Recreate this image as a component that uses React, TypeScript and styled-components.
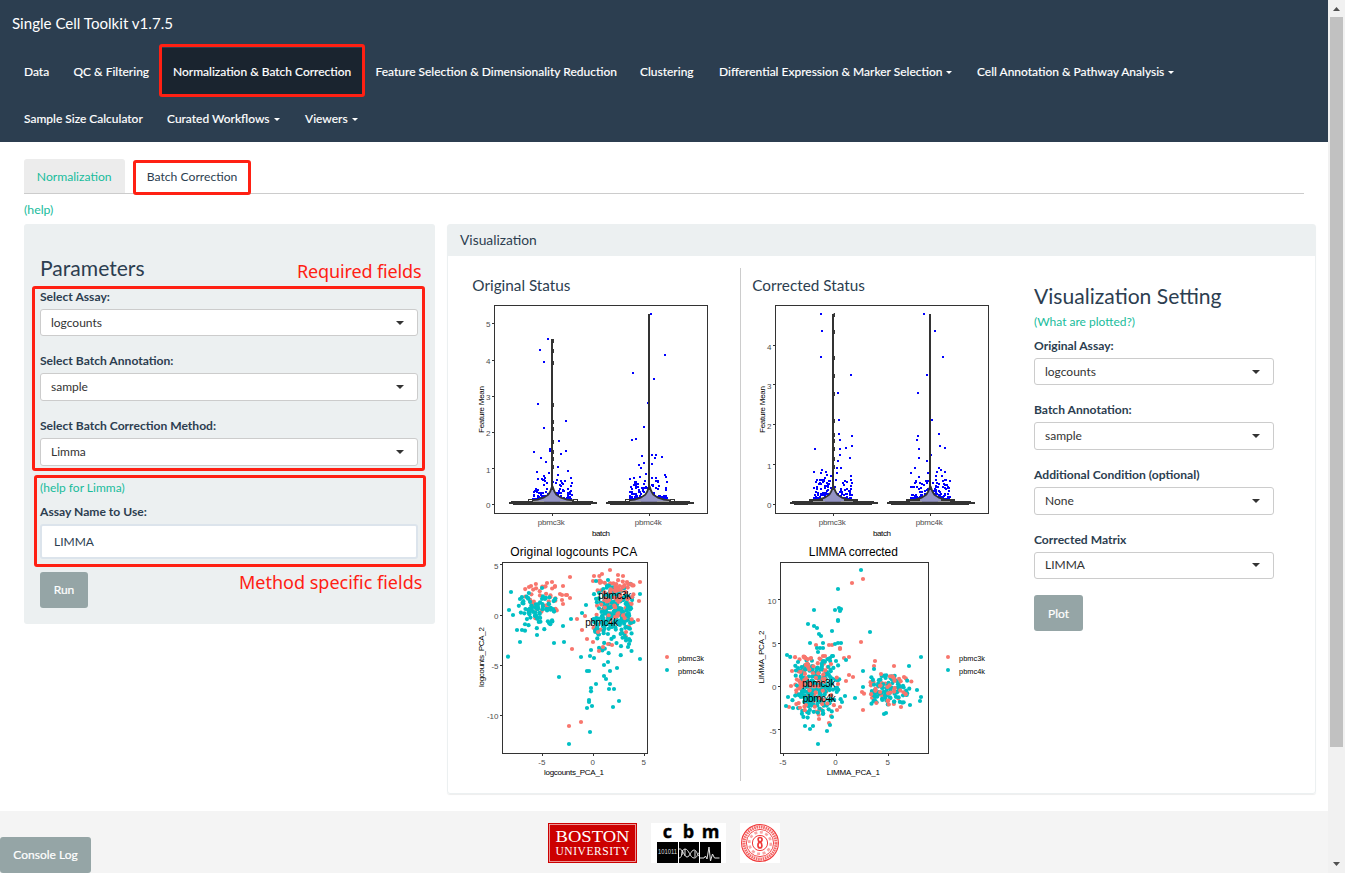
import React from 'react';
import styled, { createGlobalStyle, css } from 'styled-components';

const GlobalStyle = createGlobalStyle`
  * { box-sizing: border-box; }
  html, body { margin: 0; height: 100%; overflow: hidden; }
  body {
    background: #fff;
    color: #2c3e50;
    font: 12px/17px Lato, "Open Sans", sans-serif;
  }
`;

const Shell = styled.div`
  display: flex;
  width: 1345px;
  height: 873px;
`;

const Page = styled.div`
  position: relative;
  display: flex;
  flex-direction: column;
  width: 1328px;
  height: 873px;
`;

/* ---------- navigation ---------- */

const Navbar = styled.nav`
  display: flex;
  flex-direction: column;
  height: 142px;
  background: #2c3e50;
  color: #fff;
`;

const Brand = styled.div`
  height: 48px;
  padding-left: 12px;
  font-size: 15.1px;
  line-height: 47px;
`;

const NavRow = styled.div`
  display: flex;
  height: 47px;
  padding-left: 12px;
`;

const NavItem = styled.a<{ $active?: boolean; $w: number }>`
  display: flex;
  align-items: center;
  gap: 4px;
  width: ${p => p.$w}px;
  padding-left: 12px;
  white-space: nowrap;
  font-size: 11.98px;
  font-weight: 500;
  -webkit-text-stroke: 0.1px #fff;
  background: ${p => (p.$active ? '#1a242f' : 'transparent')};
`;

const Caret = styled.i<{ $dark?: boolean }>`
  width: 0;
  height: 0;
  margin-top: 1px;
  border: ${p => (p.$dark ? 4 : 3.2)}px solid transparent;
  border-top-color: ${p => (p.$dark ? '#333' : '#fff')};
  border-bottom: 0;
`;

/* ---------- tabs ---------- */

const Main = styled.main`
  display: flex;
  flex-direction: column;
  height: 669px;
  padding: 17px 12px 0 24px;
`;

const Tabs = styled.div`
  display: flex;
  gap: 9px;
  width: 1280px;
  height: 35px;
  border-bottom: 1px solid #ccc;
`;

const Tab = styled.a<{ $active?: boolean }>`
  width: ${p => (p.$active ? 117 : 101)}px;
  height: 34px;
  padding: 0 12.8px;
  font-size: 12.15px;
  line-height: 36px;
  white-space: nowrap;
  border-radius: 3px 3px 0 0;
  color: ${p => (p.$active ? '#2c3e50' : '#18bc9c')};
  background: ${p => (p.$active ? '#fff' : '#ececec')};
`;

const Link = styled.a`
  display: block;
  color: #18bc9c;
`;

const HelpLink = styled(Link)`
  height: 30px;
  padding-top: 7px;
  font-size: 12.3px;
`;

const Columns = styled.div`
  display: flex;
  align-items: flex-start;
  gap: 12px;
`;

/* ---------- forms ---------- */

const Sidebar = styled.section`
  width: 411px;
  height: 400px;
  padding: 32px 17px 0 16px;
  background: #ecf0f1;
  border-radius: 3px;
`;

const Heading = styled.h3`
  height: 23px;
  margin: 0 0 8.8px;
  font-size: 21.1px;
  font-weight: 400;
  line-height: 23px;
`;

const Label = styled.label`
  display: block;
  margin-bottom: 4px;
  line-height: 17px;
  font-size: 12.1px;
  font-weight: 700;
`;

const FieldBox = styled.div`
  margin-bottom: 16px;
`;

const SelectBox = styled.div`
  display: flex;
  align-items: center;
  justify-content: space-between;
  height: 27.6px;
  padding: 0 13.4px 1.2px 10px;
  border: 1px solid #ccc;
  border-radius: 3px;
  background: #fff;
  color: #333;
`;

const TextInput = styled.div`
  height: 35px;
  padding-left: 12px;
  border: 2px solid #dce4ec;
  border-radius: 3px;
  background: #fff;
  line-height: 32px;
`;

const Button = styled.button<{ $w: number; $top: number }>`
  display: block;
  width: ${p => p.$w}px;
  height: 36px;
  margin-top: ${p => p.$top}px;
  padding: 0;
  border: 0;
  border-radius: 3px;
  background: #95a5a6;
  color: #fff;
  font: 12px Lato, sans-serif;
  -webkit-text-stroke: 0.2px #fff;
`;

const MethodBlock = styled.div`
  margin-top: -3px;
  display: flex;
  flex-direction: column;
  gap: 7px;
`;

function Field({ label, value }: { label: string; value: string }) {
  return (
    <FieldBox>
      <Label>{label}</Label>
      <SelectBox>{value}<Caret $dark /></SelectBox>
    </FieldBox>
  );
}

/* ---------- visualization panel ---------- */

const Panel = styled.section`
  width: 869px;
  height: 570px;
  border: 1px solid #ecf0f1;
  border-radius: 3px;
  box-shadow: 0 1px 1px rgba(0, 0, 0, 0.07);
`;

const PanelHeader = styled.header`
  height: 31px;
  padding-left: 12px;
  background: #ecf0f1;
  font-size: 13.8px;
  line-height: 29px;
`;

const PanelBody = styled.div`
  display: flex;
  padding-top: 12px;
`;

const PlotColumn = styled.div<{ $divided?: boolean }>`
  width: 293px;
  height: 513px;
  padding: 7px 0 0 ${p => (p.$divided ? 17 : 4)}px;
  border-right: ${p => (p.$divided ? '1px solid #ccc' : '0')};
`;

const PlotTitle = styled.h4`
  height: 25px;
  margin: 0;
  padding-left: 7.3px;
  font-size: 15.3px;
  font-weight: 400;
  line-height: 20px;
`;

const Plot = styled.svg`
  display: block;
  font-family: "Liberation Sans", Arial, sans-serif;
`;

const Settings = styled.div`
  width: 240px;
  padding-top: 16px;
`;

const SettingsHeading = styled(Heading)`
  margin-bottom: 6px;
`;

const SettingsLink = styled(Link)`
  margin-bottom: 6.8px;
`;

/* ---------- plots (data coordinates are thirds of a pixel) ---------- */

type Pt = [number, number];

function makeRandom(seed: number) {
  let s = seed;
  return () => {
    s = (s * 1664525 + 1013904223) % 4294967296;
    return s / 4294967296;
  };
}

interface Blob { n: number; cx: number; cy: number; sx: number; sy: number; box: [number, number, number, number] }

function scatter(seed: number, b: Blob): Pt[] {
  const r = makeRandom(seed);
  const out: Pt[] = [];
  while (out.length < b.n) {
    const m = Math.sqrt(-2 * Math.log(r() + 1e-9));
    const a = r() * Math.PI * 2;
    const x = b.cx + m * Math.cos(a) * b.sx;
    const y = b.cy + m * Math.sin(a) * b.sy;
    if (x >= b.box[0] && x <= b.box[2] && y >= b.box[1] && y <= b.box[3]) out.push([x, y]);
  }
  return out;
}

function jitter(seed: number, cx: number): Pt[] {
  const r = makeRandom(seed);
  return Array.from({ length: 130 }, () => {
    const x = cx + (r() - 0.5) * 118;
    const y = 687 - Math.pow(r(), 2.6) * 58;
    return [x, y] as Pt;
  });
}

interface ViolinProps { left: number; ticks: Pt[]; centers: [number, number]; tops: [number, number]; points: Pt[]; dashes: number[]; boxed?: boolean; seed: number }

function ViolinShape({ cx, top, boxed }: { cx: number; top: number; boxed?: boolean }) {
  const step = (dx: number, y: number) => `${(cx + dx) / 3},${y / 3}`;
  const outline = [
    step(-1, 650), step(-6, 664), step(-12, 674), step(-26, 683), step(-44, 689), step(-70, 692),
    step(-72, 698), step(72, 698), step(70, 692), step(44, 689), step(26, 683), step(12, 674), step(6, 664), step(1, 650),
  ].join(' ');
  return (
    <g>
      <polygon points={outline} fill="#9494c4" stroke="#333" strokeWidth={1.8} />
      <g fill="#999" shapeRendering="crispEdges">
        <rect x={(cx - 66) / 3} y={230.5} width={14} height={2} />
        <rect x={(cx + 24) / 3} y={230.5} width={14} height={2} />
      </g>
      <rect x={Math.round((cx - 3) / 3)} y={top / 3} width={2} height={(660 - top) / 3} fill="#333" shapeRendering="crispEdges" />
      <g fill="#333" shapeRendering="crispEdges">
        <rect x={(cx - 129) / 3} y={232} width={88} height={2} />
        <rect x={(cx - 123) / 3} y={231} width={21} height={1} />
        <rect x={(cx + 60) / 3} y={231} width={21} height={1} />
        <rect x={(cx - 117) / 3} y={233} width={78} height={2} />
      </g>
      {boxed ? (
        <g fill="#fff" stroke="#333" strokeWidth={1} shapeRendering="crispEdges">
          <rect x={Math.round((cx - 72) / 3) + 0.5} y={229.5} width={4} height={2} />
          <rect x={Math.round((cx + 62) / 3) + 0.5} y={229.5} width={4} height={2} />
        </g>
      ) : (
        <g fill="#333" shapeRendering="crispEdges">
          <rect x={(cx - 72) / 3} y={229} width={14} height={2} />
          <rect x={(cx + 32) / 3} y={229} width={14} height={2} />
        </g>
      )}
    </g>
  );
}

function Violin({ left, ticks, centers, tops, points, dashes, boxed, seed }: ViolinProps) {
  const dots = [...points, ...jitter(seed, centers[0]), ...jitter(seed + 5, centers[1])];
  return (
    <g transform="translate(0 -30)" fontSize={8} fill="#4d4d4d">
      <g fill="#00f" shapeRendering="crispEdges">
        {dots.map(([x, y], i) => <rect key={i} x={Math.round(x / 3 - 1)} y={Math.round(y / 3 - 1)} width={2} height={2} />)}
      </g>
      {centers.map((c, i) => <ViolinShape key={c} cx={c} top={tops[i]} boxed={boxed} />)}
      {dashes.map(y => <rect key={y} x={(centers[0] + 1) / 3} y={y / 3 - 1} width={1.3} height={4} fill="#333" />)}
      <rect x={left} y={35.5} width={213} height={208} fill="none" stroke="#333" shapeRendering="crispEdges" />
      {ticks.map(([v, y]) => (
        <g key={v}>
          <path d={`M${left - 3} ${Math.floor(y / 3) + 0.5}h3`} stroke="#333" shapeRendering="crispEdges" />
          <text x={left - 4} y={y / 3 + 4} textAnchor="end">{v}</text>
        </g>
      ))}
      {centers.map((c, i) => (
        <g key={c}>
          <path d={`M${Math.floor(c / 3) + 0.5} 244v2`} stroke="#333" shapeRendering="crispEdges" />
          <text x={c / 3 - 1} y={255} textAnchor="middle" textLength={27}>{i ? 'pbmc4k' : 'pbmc3k'}</text>
        </g>
      ))}
      <text x={left + 106.5} y={266} textAnchor="middle" textLength={18} fill="#000">batch</text>
      <text transform={`translate(${left - 11} 139.5) rotate(-90)`} textAnchor="middle" textLength={47} fill="#000">Feature Mean</text>
    </g>
  );
}

const RED = '#f8766d';
const TEAL = '#00bfc4';

interface PcaProps {
  title: string; titleX: number; titleW: number; xLabel: string; yLabel: string; yLabelW: number; xLabelW: number; xLabelX: number;
  frame: [number, number]; xTicks: Pt[]; yTicks: Pt[]; red: Pt[]; teal: Pt[]; blobs: [string, Blob][]; marks: [string, number, number][]; legendX: number; seed: number;
}

function Dots({ pts, color }: { pts: Pt[]; color: string }) {
  return <g fill={color}>{pts.map(([x, y], i) => <circle key={i} cx={x / 3} cy={y / 3} r={2.1} />)}</g>;
}

function Pca(p: PcaProps) {
  return (
    <g transform="translate(0 240)" fontSize={8} fill="#4d4d4d">
      <text x={p.titleX / 3} y={15.6} fontSize={12} textAnchor="middle" textLength={p.titleW} fill="#000">{p.title}</text>
      {p.blobs.map(([c, b], i) => <Dots key={i} color={c} pts={scatter(p.seed + i * 17, b)} />)}
      <Dots color={RED} pts={p.red} />
      <Dots color={TEAL} pts={p.teal} />
      <g fill="#000" fontSize={10}>
        {p.marks.map(([t, x, y]) => <text key={t} x={x / 3} y={y / 3} textAnchor="middle" textLength={33}>{t}</text>)}
      </g>
      <rect x={p.frame[0]} y={22.5} width={p.frame[1]} height={191} fill="none" stroke="#333" shapeRendering="crispEdges" />
      {p.yTicks.map(([v, y]) => (
        <g key={v}>
          <path d={`M${p.frame[0] - 3} ${Math.floor(y / 3) + 0.5}h3`} stroke="#333" shapeRendering="crispEdges" />
          <text x={p.frame[0] - 4} y={y / 3 + 4} textAnchor="end">{v}</text>
        </g>
      ))}
      {p.xTicks.map(([v, x]) => (
        <g key={v}>
          <path d={`M${Math.floor(x / 3) + 0.5} 214v2`} stroke="#333" shapeRendering="crispEdges" />
          <text x={x / 3 - 0.5} y={224.7} textAnchor="middle">{v}</text>
        </g>
      ))}
      <text x={p.xLabelX / 3} y={235} textAnchor="middle" textLength={p.xLabelW} fill="#000">{p.xLabel}</text>
      <text transform="translate(19 117) rotate(-90)" textAnchor="middle" textLength={p.yLabelW} fill="#000">{p.yLabel}</text>
      <circle cx={p.legendX} cy={117} r={2} fill={RED} />
      <circle cx={p.legendX} cy={130} r={2} fill={TEAL} />
      <g fill="#000" fontSize={7.4}>
        <text x={p.legendX + 11} y={121} textLength={26}>pbmc3k</text>
        <text x={p.legendX + 11} y={134} textLength={26}>pbmc4k</text>
      </g>
    </g>
  );
}

const originalViolin: Pt[] = [
  [249, 207], [225, 240], [237, 276], [219, 402], [303, 453], [237, 474], [282, 513], [207, 546], [303, 543], [288, 552], [255, 537], [255, 543],
  [228, 564], [243, 576], [279, 591], [309, 603], [216, 606], [252, 609], [279, 615], [237, 618], [219, 627], [231, 627], [240, 624], [276, 630],
  [318, 624], [300, 633], [558, 132], [600, 255], [504, 309], [567, 327], [549, 399], [537, 471], [513, 507], [501, 510], [531, 558], [561, 555],
  [573, 555], [591, 561], [570, 564], [537, 579], [522, 585], [561, 582], [528, 594], [543, 612], [600, 615], [603, 621], [495, 627], [507, 624],
  [561, 624], [573, 624], [579, 633], [525, 621],
];

const correctedViolin: Pt[] = [
  [228, 132], [231, 183], [228, 261], [318, 315], [279, 369], [282, 450], [282, 492], [321, 498], [285, 510], [321, 528], [303, 534], [210, 537],
  [285, 537], [285, 555], [315, 564], [279, 573], [276, 594], [288, 594], [207, 606], [231, 600], [228, 609], [243, 606], [246, 615], [276, 609],
  [318, 618], [216, 630], [240, 624], [258, 618], [237, 633], [222, 642], [252, 633], [537, 132], [570, 183], [594, 261], [546, 315], [519, 369],
  [561, 450], [582, 492], [519, 498], [516, 510], [585, 528], [600, 534], [522, 537], [558, 555], [522, 564], [546, 573], [510, 594], [582, 594],
  [588, 600], [600, 606], [498, 609], [549, 609], [522, 621], [573, 618], [576, 606], [498, 651], [591, 618], [603, 630],
];

const originalTeal: Pt[] = [
  [129, 350], [165, 306], [216, 285], [267, 309], [297, 306], [282, 411], [312, 612], [375, 576], [366, 504], [381, 498], [372, 480], [372, 486],
  [378, 444], [378, 454], [393, 432], [348, 351], [375, 348], [387, 354], [378, 330], [366, 393], [372, 393], [429, 366], [417, 375], [456, 384],
  [435, 393], [417, 408], [423, 417], [435, 432], [432, 447], [447, 447], [462, 483], [444, 501], [525, 357], [489, 321], [492, 312], [138, 156],
  [132, 210], [144, 225], [156, 270], [171, 270], [180, 272], [318, 237], [351, 219], [363, 195], [294, 258], [525, 162], [165, 177], [231, 144],
  [393, 123], [429, 120],
];

const originalRed: Pt[] = [
  [312, 558], [348, 546], [321, 327], [351, 270], [366, 297], [384, 306], [336, 237], [360, 228], [315, 111], [435, 90], [459, 105], [474, 108],
  [411, 102], [387, 108], [403, 108], [384, 123], [525, 126], [486, 126], [498, 132], [246, 129], [261, 126], [270, 138], [294, 138], [198, 138],
  [192, 141], [285, 162], [291, 180], [294, 192], [306, 165], [315, 174], [303, 165], [291, 165], [519, 240], [522, 183], [483, 276], [414, 321],
  [402, 333], [429, 312], [441, 315], [399, 276], [452, 138], [458, 146], [464, 138], [450, 150], [466, 150], [445, 130], [460, 220], [458, 228],
];

const correctedTeal: Pt[] = [
  [348, 90], [279, 147], [282, 204], [288, 207], [285, 213], [270, 210], [207, 210], [279, 240], [279, 243], [189, 252], [207, 258], [216, 264],
  [261, 273], [222, 282], [375, 276], [228, 288], [195, 309], [234, 309], [270, 312], [279, 309], [288, 309], [126, 345], [261, 348], [273, 363],
  [303, 360], [528, 351], [492, 378], [354, 393], [387, 387], [354, 441], [330, 474], [300, 468], [291, 486], [123, 498], [219, 612], [246, 573],
  [195, 567], [180, 558], [204, 558], [255, 555], [261, 531], [234, 522], [417, 522], [423, 519], [516, 450], [528, 471], [525, 483], [495, 495],
  [129, 471], [144, 504], [159, 366], [159, 384], [216, 324], [225, 324], [234, 324], [219, 336], [264, 348], [255, 354],
];

const correctedRed: Pt[] = [
  [321, 129], [354, 117], [348, 306], [252, 315], [261, 315], [285, 327], [297, 354], [312, 351], [390, 363], [387, 378], [447, 378], [408, 402],
  [312, 405], [324, 411], [354, 510], [252, 549], [213, 315], [303, 423], [279, 432], [351, 456], [357, 461], [132, 501], [138, 438], [141, 393],
  [180, 354], [258, 372], [477, 411], [468, 501], [285, 501], [276, 510], [258, 528], [222, 537], [234, 348], [240, 348], [285, 324],
];

function OriginalPlots() {
  return (
    <Plot width={258} height={481} viewBox="0 0 258 481">
      <Violin left={29.5} ticks={[[5, 160], [4, 271], [3, 379], [2, 487], [1, 596], [0, 703]]} centers={[262, 553]} tops={[207, 132]}
        points={originalViolin} dashes={[210, 240, 276, 402, 453, 474, 513, 543, 564, 588]} boxed seed={11} />
      <Pca title="Original logcounts PCA" titleX={326} titleW={127} xLabel="logcounts_PCA_1" xLabelX={327} xLabelW={60} yLabel="logcounts_PCA_2" yLabelW={60}
        frame={[37.5, 145]} xTicks={[[-5, 232], [0, 385], [5, 538]]} yTicks={[[5, 74], [0, 226], [-5, 376], [-10, 526]]}
        red={originalRed} teal={originalTeal} legendX={202} seed={91} marks={[['pbmc3k', 449, 177], ['pbmc4k', 410, 258]]}
        blobs={[
          [RED, { n: 34, cx: 235, cy: 180, sx: 34, sy: 30, box: [180, 130, 280, 268] }],
          [TEAL, { n: 78, cx: 228, cy: 210, sx: 42, sy: 27, box: [160, 150, 278, 270] }],
          [RED, { n: 60, cx: 452, cy: 180, sx: 40, sy: 55, box: [384, 120, 512, 290] }],
          [TEAL, { n: 210, cx: 448, cy: 225, sx: 40, sy: 52, box: [384, 130, 508, 346] }],
          [RED, { n: 45, cx: 462, cy: 160, sx: 30, sy: 42, box: [400, 120, 512, 290] }],
        ]} />
    </Plot>
  );
}

function CorrectedPlots() {
  return (
    <Plot width={258} height={481} viewBox="0 0 258 481">
      <Violin left={30.5} ticks={[[4, 227], [3, 344], [2, 464], [1, 584], [0, 703]]} centers={[265, 556]} tops={[132, 132]}
        points={correctedViolin} dashes={[132, 183, 261, 315, 369, 450, 492, 510, 534, 564, 588]} seed={37} />
      <Pca title="LIMMA corrected" titleX={325} titleW={89} xLabel="LIMMA_PCA_1" xLabelX={325} xLabelW={53} yLabel="LIMMA_PCA_2" yLabelW={53}
        frame={[35.5, 148]} xTicks={[[-5, 115], [0, 273], [5, 430]]} yTicks={[[10, 179], [5, 310], [0, 439], [-5, 569]]}
        red={correctedRed} teal={correctedTeal} legendX={203} seed={53} marks={[['pbmc3k', 221, 441], ['pbmc4k', 223, 486]]}
        blobs={[
          [RED, { n: 65, cx: 205, cy: 425, sx: 38, sy: 48, box: [142, 350, 285, 530] }],
          [TEAL, { n: 200, cx: 212, cy: 440, sx: 37, sy: 50, box: [135, 350, 288, 535] }],
          [RED, { n: 45, cx: 205, cy: 430, sx: 34, sy: 44, box: [142, 350, 285, 530] }],
          [RED, { n: 22, cx: 430, cy: 448, sx: 42, sy: 26, box: [365, 405, 500, 500] }],
          [TEAL, { n: 88, cx: 430, cy: 452, sx: 42, sy: 26, box: [365, 405, 504, 502] }],
          [RED, { n: 24, cx: 425, cy: 448, sx: 40, sy: 26, box: [365, 405, 500, 500] }],
        ]} />
    </Plot>
  );
}

/* ---------- footer ---------- */

const Footer = styled.footer`
  display: flex;
  justify-content: center;
  gap: 14px;
  height: 62px;
  padding-top: 12px;
  background: #f4f4f4;
`;

const Logo = styled.svg`
  overflow: visible;
`;

const ConsoleButton = styled.button`
  position: absolute;
  left: 0;
  bottom: 0;
  width: 91px;
  height: 36px;
  padding: 0 0 2px;
  border: 0;
  border-radius: 3px;
  background: #95a5a6;
  color: #fff;
  font: 12px Lato, sans-serif;
  -webkit-text-stroke: 0.2px #fff;
`;

function BostonLogo() {
  return (
    <Logo width="89" height="40" viewBox="0 0 89 40" fontFamily="Liberation Serif, serif" fill="#fff">
      <rect width="89" height="40" fill="#c00" />
      <rect x="1.5" y="1.5" width="86" height="37" fill="none" stroke="#f3b8b8" strokeWidth="0.8" />
      <text x="7.5" y="19" fontSize="17" textLength="74" lengthAdjust="spacingAndGlyphs">BOSTON</text>
      <text x="7.5" y="32" fontSize="11.5" textLength="74">UNIVERSITY</text>
    </Logo>
  );
}

function CbmLogo() {
  return (
    <Logo width="75" height="40" viewBox="0 0 75 40">
      <rect width="75" height="40" fill="#fff" />
      <g fontFamily="Open Sans, sans-serif" fontWeight="700" fontSize="18" fill="#000" stroke="#000" strokeWidth=".4" textAnchor="middle">
        <text x="16.5" y="15">c</text><text x="37.5" y="15">b</text><text x="59.5" y="15">m</text>
      </g>
      <path d="M6 19h21v21H6zM28 19h20v21H28zM49 19h21v21H49z" fill="#000" />
      <text x="7" y="31" fontSize="6.5" fontFamily="Liberation Sans, sans-serif" fill="#ddd" textLength="19" lengthAdjust="spacingAndGlyphs">101011</text>
      <g fill="none" stroke="#e4e4e4" strokeWidth="1">
        <path d="M28 35c4 0 2-9 6-9s5 9 9 9 3-5 5-5M28 26c4-1 5 8 8 8s4-7 7-7 3 5 5 6M31 27v5M34 26v7M44 28v6" />
        <path d="M49 35h4l1.5-2 1.5 3 2-12 1.5 14 2-7 2 4h5" />
      </g>
    </Logo>
  );
}

function SealLogo() {
  return (
    <Logo width="40" height="40" viewBox="0 0 40 40" fill="none" stroke="#f03a3a">
      <rect width="40" height="40" fill="#fff" stroke="none" />
      <circle cx="20" cy="20" r="18.4" strokeWidth="1.1" />
      <circle cx="20" cy="20" r="16" strokeWidth="3" strokeDasharray="1.6 .7" opacity=".75" />
      <circle cx="20" cy="20" r="13.6" strokeWidth=".9" />
      <circle cx="20" cy="20" r="10.8" strokeWidth="2.6" strokeDasharray="3 2.6" opacity=".45" />
      <circle cx="20" cy="20" r="7.6" strokeWidth="1" />
      <path d="M20 14.5c-2.5 0-2.5 3.5 0 4.5s2.5 6 0 6-3-5 0-6 2.5-4.5 0-4.5" strokeWidth="1.7" />
    </Logo>
  );
}

/* ---------- annotations over the page ---------- */

const Marker = styled.div<{ $x: number; $y: number; $w: number; $h: number }>`
  position: absolute;
  left: ${p => p.$x}px;
  top: ${p => p.$y}px;
  width: ${p => p.$w}px;
  height: ${p => p.$h}px;
  border: 3px solid #ff2013;
  border-radius: 3px;
`;

const note = css`
  position: absolute;
  color: #ff2013;
  font: 18px/24px "Noto Sans", "Open Sans", sans-serif;
  white-space: nowrap;
`;

const RequiredNote = styled.div`
  ${note}
  left: 297px;
  top: 259px;
  letter-spacing: -0.14px;
`;

const MethodNote = styled.div`
  ${note}
  left: 239px;
  top: 570px;
`;

/* ---------- scrollbar ---------- */

const Scrollbar = styled.div`
  display: flex;
  flex-direction: column;
  align-items: center;
  justify-content: space-between;
  width: 17px;
  height: 873px;
  background: #f1f1f1;
`;

const Thumb = styled.div`
  width: 13px;
  height: 730px;
  margin-bottom: 109px;
  background: #c1c1c1;
`;

const Arrow = styled.svg`
  width: 17px;
  height: 17px;
  fill: #505050;
`;

export default function App() {
  return (
    <>
      <GlobalStyle />
      <Shell>
        <Page>
          <Navbar>
            <Brand>Single Cell Toolkit v1.7.5</Brand>
            <NavRow>
              <NavItem $w={49.5}>Data</NavItem>
              <NavItem $w={99.5}>QC &amp; Filtering</NavItem>
              <NavItem $w={202.5} $active>Normalization &amp; Batch Correction</NavItem>
              <NavItem $w={264.5}>Feature Selection &amp; Dimensionality Reduction</NavItem>
              <NavItem $w={79}>Clustering</NavItem>
              <NavItem $w={258}>Differential Expression &amp; Marker Selection<Caret /></NavItem>
              <NavItem $w={222}>Cell Annotation &amp; Pathway Analysis<Caret /></NavItem>
            </NavRow>
            <NavRow>
              <NavItem $w={143}>Sample Size Calculator</NavItem>
              <NavItem $w={138}>Curated Workflows<Caret /></NavItem>
              <NavItem $w={80}>Viewers<Caret /></NavItem>
            </NavRow>
          </Navbar>
          <Main>
            <Tabs>
              <Tab>Normalization</Tab>
              <Tab $active>Batch Correction</Tab>
            </Tabs>
            <HelpLink>(help)</HelpLink>
            <Columns>
              <Sidebar>
                <Heading>Parameters</Heading>
                <Field label="Select Assay:" value="logcounts" />
                <Field label="Select Batch Annotation:" value="sample" />
                <Field label="Select Batch Correction Method:" value="Limma" />
                <MethodBlock>
                  <Link>(help for Limma)</Link>
                  <div>
                    <Label>Assay Name to Use:</Label>
                    <TextInput>LIMMA</TextInput>
                  </div>
                </MethodBlock>
                <Button $w={48} $top={13}>Run</Button>
              </Sidebar>
              <Panel>
                <PanelHeader>Visualization</PanelHeader>
                <PanelBody>
                  <PlotColumn $divided>
                    <PlotTitle>Original Status</PlotTitle>
                    <OriginalPlots />
                  </PlotColumn>
                  <PlotColumn>
                    <PlotTitle>Corrected Status</PlotTitle>
                    <CorrectedPlots />
                  </PlotColumn>
                  <Settings>
                    <SettingsHeading>Visualization Setting</SettingsHeading>
                    <SettingsLink>(What are plotted?)</SettingsLink>
                    <Field label="Original Assay:" value="logcounts" />
                    <Field label="Batch Annotation:" value="sample" />
                    <Field label="Additional Condition (optional)" value="None" />
                    <Field label="Corrected Matrix" value="LIMMA" />
                    <Button $w={49} $top={0}>Plot</Button>
                  </Settings>
                </PanelBody>
              </Panel>
            </Columns>
          </Main>
          <Footer>
            <BostonLogo />
            <CbmLogo />
            <SealLogo />
          </Footer>
          <ConsoleButton>Console Log</ConsoleButton>
          <Marker $x={159} $y={44} $w={206} $h={53} />
          <Marker $x={133} $y={160} $w={118} $h={35} />
          <Marker $x={32} $y={286} $w={393} $h={185} />
          <Marker $x={34} $y={475} $w={392} $h={92} />
          <RequiredNote>Required fields</RequiredNote>
          <MethodNote>Method specific fields</MethodNote>
        </Page>
        <Scrollbar>
          <Arrow viewBox="0 0 17 17"><path d="M5 11h7L8.500 7z" /></Arrow>
          <Thumb />
          <Arrow viewBox="0 0 17 17"><path d="M5 6h7l-3.500 4z" /></Arrow>
        </Scrollbar>
      </Shell>
    </>
  );
}
